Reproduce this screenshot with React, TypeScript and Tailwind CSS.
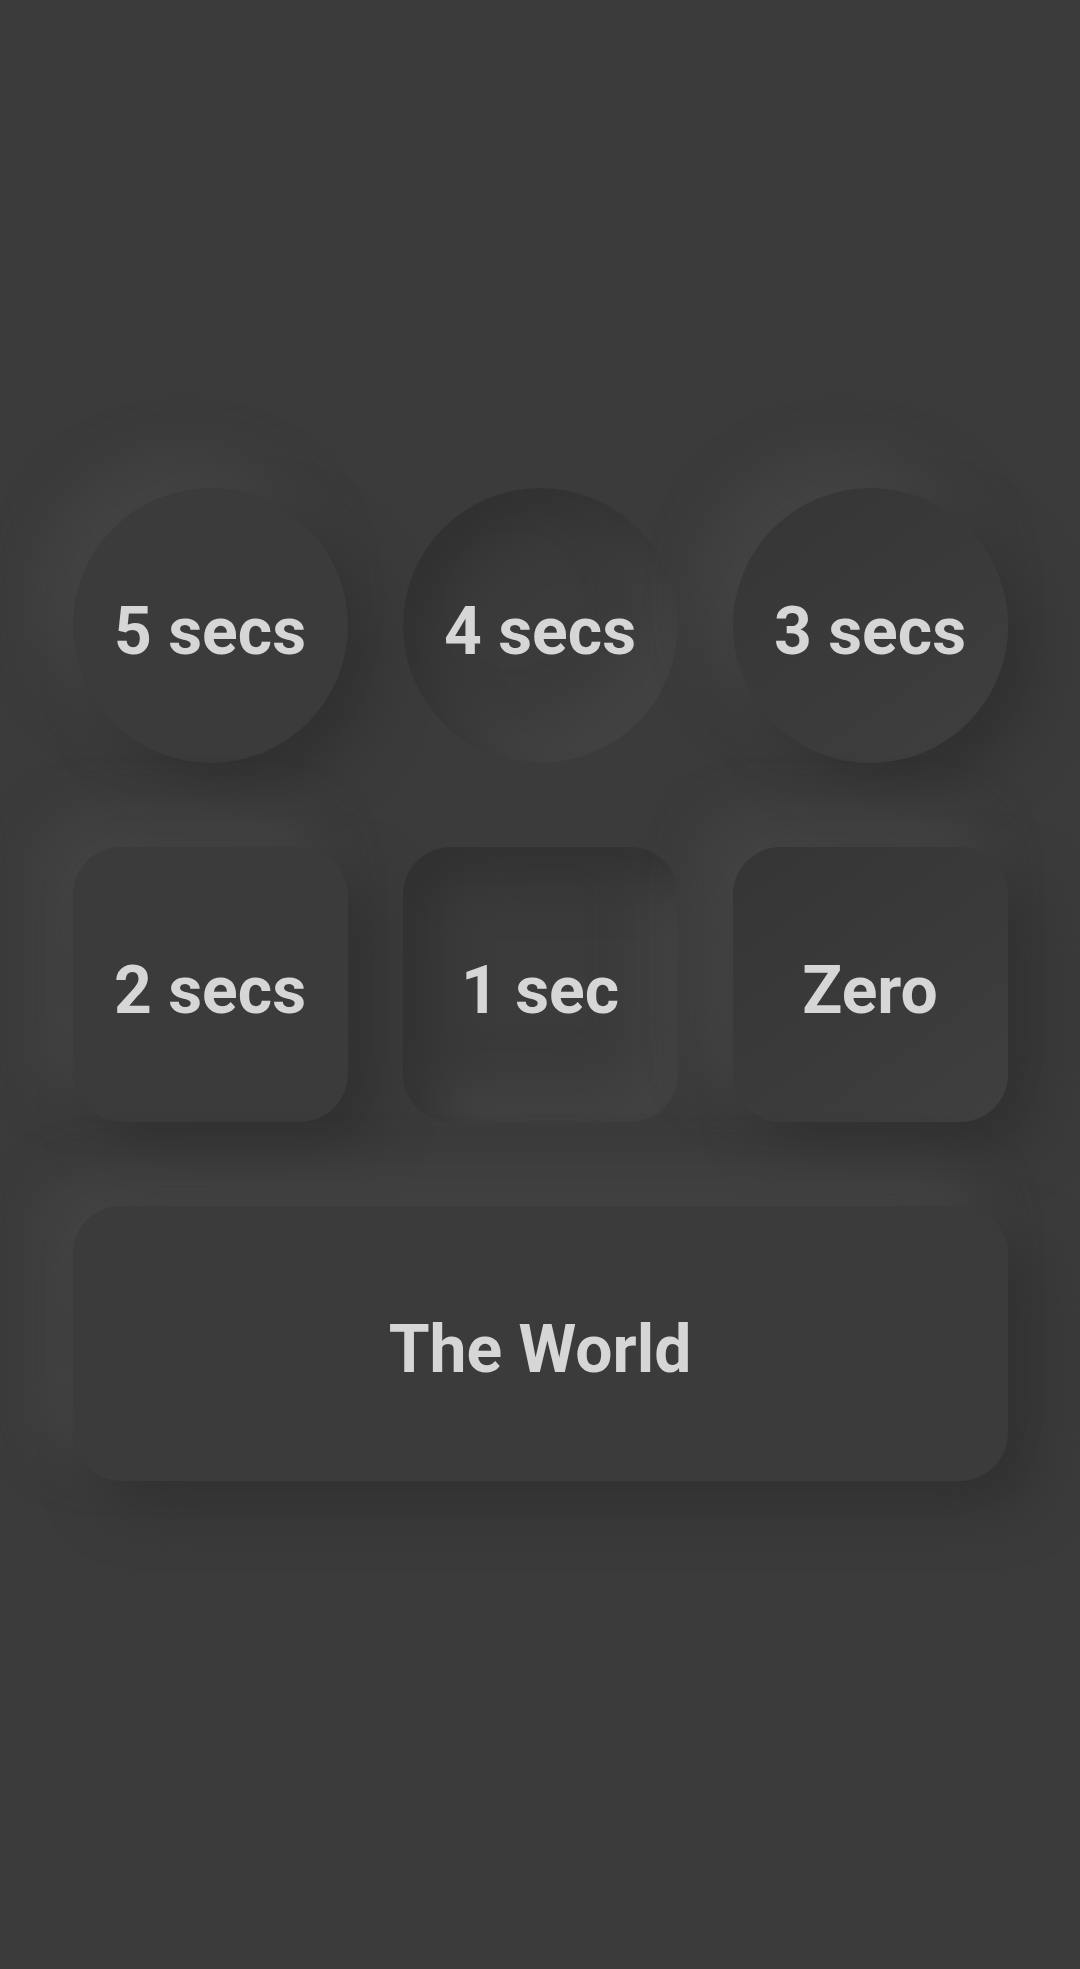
import type { ReactNode } from "react";

type Variant = "flat" | "pressed" | "concave";

const variantClass: Record<Variant, string> = {
    flat: "bg-[#3b3b3b] shadow-[27px_27px_54px_#313131,-27px_-27px_54px_#454545]",
    pressed:
        "bg-[#3b3b3b] shadow-[inset_27px_27px_54px_#313131,inset_-27px_-27px_54px_#454545]",
    concave:
        "bg-[linear-gradient(145deg,#353535,#3f3f3f)] shadow-[27px_27px_54px_#313131,-27px_-27px_54px_#454545]",
};

function Tile({
    children,
    variant,
    shape,
    wide = false,
}: {
    children: ReactNode;
    variant: Variant;
    shape: "circle" | "square";
    wide?: boolean;
}) {
    return (
        <button
            className={`flex h-[275px] items-center justify-center pt-[12px] text-[66px] font-bold leading-none text-[#d6d6d6] ${
                shape === "circle" ? "w-[275px] rounded-full" : "rounded-[48px]"
            } ${wide ? "col-span-3 w-full" : "w-[275px]"} ${variantClass[variant]}`}
        >
            {children}
        </button>
    );
}

export default function App() {
    return (
        <div
            className="flex min-h-screen items-center justify-center bg-[#3b3b3b]"
            style={{ fontFamily: "Roboto, 'Liberation Sans', sans-serif" }}
        >
            <div className="grid grid-cols-[275px_275px_275px] gap-x-[55px] gap-y-[84px]">
                <Tile variant="flat" shape="circle">
                    5 secs
                </Tile>
                <Tile variant="pressed" shape="circle">
                    4 secs
                </Tile>
                <Tile variant="concave" shape="circle">
                    3 secs
                </Tile>
                <Tile variant="flat" shape="square">
                    2 secs
                </Tile>
                <Tile variant="pressed" shape="square">
                    1 sec
                </Tile>
                <Tile variant="concave" shape="square">
                    Zero
                </Tile>
                <Tile variant="flat" shape="square" wide>
                    The World
                </Tile>
            </div>
        </div>
    );
}
